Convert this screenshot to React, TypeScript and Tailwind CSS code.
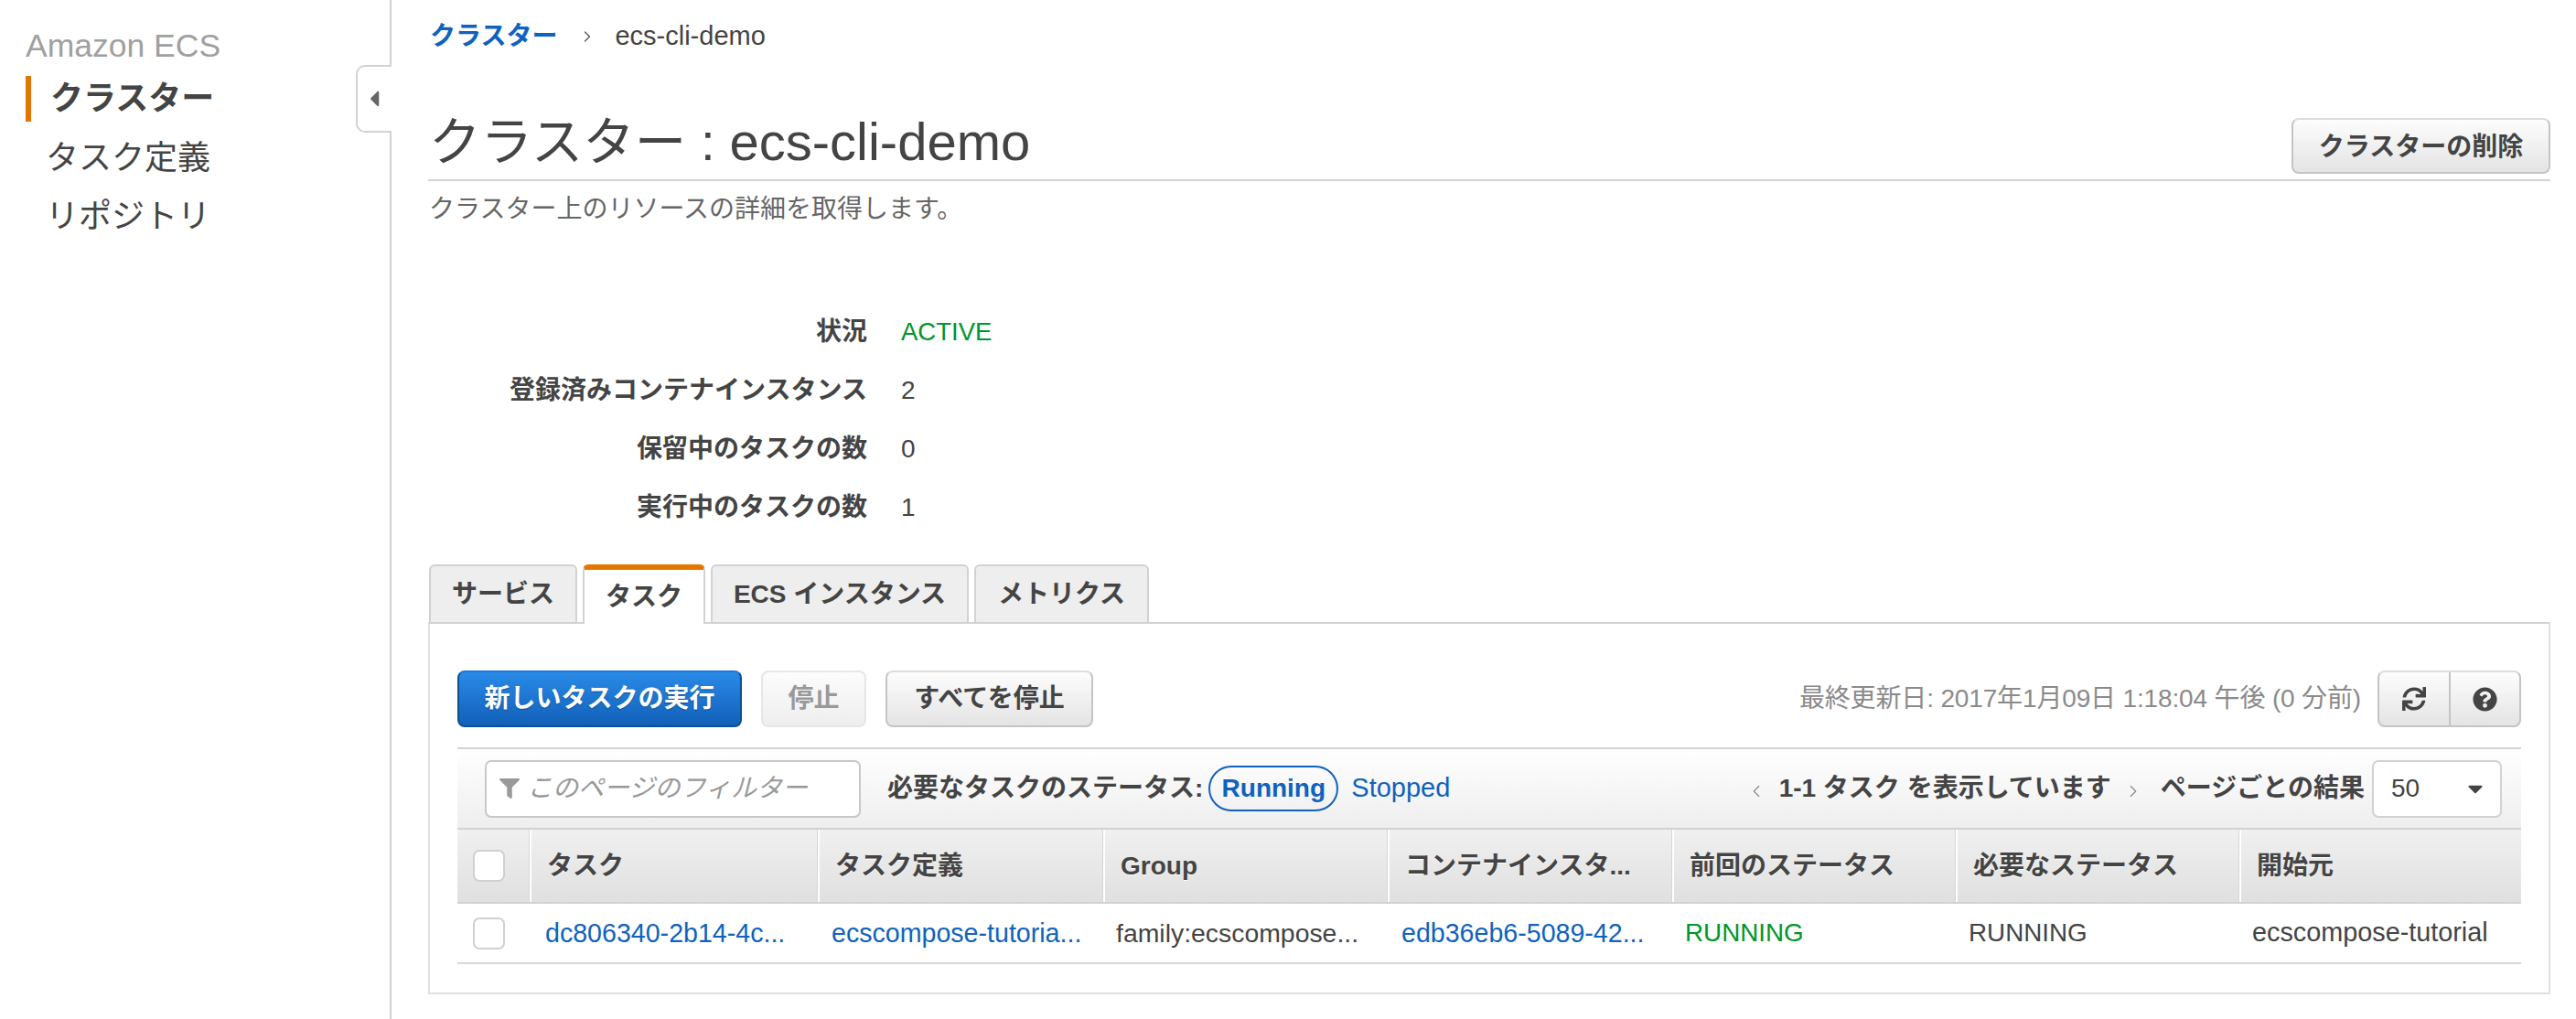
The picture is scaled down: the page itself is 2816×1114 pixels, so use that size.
import { FaCaretDown, FaCaretLeft, FaFilter, FaQuestionCircle, FaSync } from 'react-icons/fa'
import { ChevronLeft, ChevronRight } from 'lucide-react'

const detailRows = [
  { label: '状況', value: 'ACTIVE', green: true },
  { label: '登録済みコンテナインスタンス', value: '2' },
  { label: '保留中のタスクの数', value: '0' },
  { label: '実行中のタスクの数', value: '1' },
]

const columns = ['タスク', 'タスク定義', 'Group', 'コンテナインスタ...', '前回のステータス', '必要なステータス', '開始元']

const gridCols = 'grid grid-cols-[79px_315px_312px_311px_311px_310px_310px_308px]'

function Checkbox() {
  return <div className="h-[35px] w-[35px] rounded-[7px] border-2 border-[#d0d0d0] bg-white" />
}

export default function App() {
  return (
    <div className="flex min-h-[1114px] overflow-hidden bg-white text-[28px] text-[#444] [font-family:'Liberation_Sans','Noto_Sans_CJK_JP',sans-serif]">
      {/* sidebar */}
      <aside className="relative w-[428px] shrink-0 border-r-2 border-[#d2d2d2] pt-[30px]">
        <div className="pl-[28px] text-[35.5px] leading-[40px] text-[#a0a0a0]">Amazon ECS</div>
        <div className="mt-[13px] ml-[28px] flex h-[50px] items-center border-l-[6px] border-[#e47600] pl-[21px] text-[36px] font-bold">
          クラスター
        </div>
        <div className="mt-[15px] flex h-[50px] items-center pl-[50px] text-[36px]">タスク定義</div>
        <div className="mt-[14px] flex h-[50px] items-center pl-[50px] text-[36px]">リポジトリ</div>
        <div className="absolute top-[71px] right-[-2px] flex h-[74px] w-[39px] items-center rounded-l-[10px] border-2 border-r-0 border-[#d2d2d2] bg-white pl-[10px]">
          <FaCaretLeft className="h-[28px] w-[16px] text-[#666]" />
        </div>
      </aside>

      {/* main */}
      <main className="min-w-0 flex-1 pr-[28px] pl-[40px]">
        <div className="flex h-[80px] items-center pl-[2px]">
          <a className="font-bold text-[#0f62bd]">クラスター</a>
          <ChevronRight className="mr-[20px] ml-[23px] h-[22px] w-[20px] text-[#555]" strokeWidth={1.5} />
          <span className="text-[29px]">ecs-cli-demo</span>
        </div>

        <div className="flex h-[118px] items-end justify-between border-b-2 border-[#d2d2d2]">
          <h1 className="mb-[9px] pl-[1px] text-[56.5px] leading-[62px] font-normal">
            クラスター : <span className="text-[58px]">ecs-cli-demo</span>
          </h1>
          <button className="mb-[6px] flex h-[61px] w-[283px] items-center justify-center rounded-[8px] border-2 border-[#c4c4c4] border-t-[#dcdcdc] bg-linear-to-b from-[#fdfdfd] to-[#e4e4e4] pt-[2px] font-bold">
            クラスターの削除
          </button>
        </div>

        <div className="flex h-[60px] items-center pt-[2px] pl-[1px] text-[#666]">クラスター上のリソースの詳細を取得します。</div>

        <dl className="mt-[72px]">
          {detailRows.map(row => (
            <div key={row.label} className="flex h-[64px] items-center pt-[2px]">
              <dt className="w-[480px] text-right font-bold">{row.label}</dt>
              <dd className={row.green ? 'ml-[37px] text-[27.5px] text-[#00962a]' : 'ml-[37px]'}>{row.value}</dd>
            </div>
          ))}
        </dl>

        {/* tabs */}
        <div className="relative z-10 mt-[31px] flex h-[65px] gap-[6px] pl-[1px]">
          <div className="flex w-[162px] items-center justify-center rounded-t-[6px] border-2 border-[#d2d2d2] bg-[#eeeeee] font-bold">サービス</div>
          <div className="flex w-[134px] items-center justify-center rounded-t-[6px] border-x-2 border-t-[6px] border-[#d2d2d2] border-t-[#e47600] bg-white font-bold">タスク</div>
          <div className="flex w-[282px] items-center justify-center rounded-t-[6px] border-2 border-[#d2d2d2] bg-[#eeeeee] font-bold">ECS インスタンス</div>
          <div className="flex w-[191px] items-center justify-center rounded-t-[6px] border-2 border-[#d2d2d2] bg-[#eeeeee] font-bold">メトリクス</div>
        </div>

        {/* panel */}
        <section className="-mt-[2px] border-2 border-[#e0e0e0] border-t-[#d2d2d2] px-[30px] pt-[51px] pb-[31px]">
          <div className="flex h-[62px] items-center">
            <button className="flex h-[62px] w-[311px] items-center justify-center rounded-[8px] border-2 border-[#0b4f94] border-t-[#1a78d8] bg-linear-to-b from-[#2a8ae8] to-[#1160b8] font-bold text-white [text-shadow:0_1px_1px_#0b4f94]">
              新しいタスクの実行
            </button>
            <button className="ml-[21px] flex h-[62px] w-[115px] items-center justify-center rounded-[8px] border-2 border-[#e6e6e6] bg-linear-to-b from-[#fcfcfc] to-[#eeeeee] font-bold text-[#999]">
              停止
            </button>
            <button className="ml-[21px] flex h-[62px] w-[227px] items-center justify-center rounded-[8px] border-2 border-[#c4c4c4] border-t-[#dcdcdc] bg-linear-to-b from-[#fdfdfd] to-[#e4e4e4] font-bold">
              すべてを停止
            </button>
            <span className="mr-[18px] ml-auto tracking-[-0.15px] text-[#8a8a8a]">最終更新日: 2017年1月09日 1:18:04 午後 (0 分前)</span>
            <div className="flex h-[62px] w-[157px] rounded-[8px] border-2 border-[#c4c4c4] border-t-[#dcdcdc] bg-linear-to-b from-[#fdfdfd] to-[#e4e4e4]">
              <div className="flex flex-1 items-center justify-center border-r-2 border-[#c4c4c4]">
                <FaSync className="h-[26px] w-[26px] text-[#444]" />
              </div>
              <div className="flex flex-1 items-center justify-center">
                <FaQuestionCircle className="h-[27px] w-[27px] text-[#444]" />
              </div>
            </div>
          </div>

          {/* filter bar */}
          <div className="mt-[22px] flex h-[88px] items-center border-t-2 border-[#d2d2d2] bg-linear-to-b from-white to-[#eeeeee] pr-[21px] pl-[30px]">
            <div className="flex h-[63px] w-[411px] items-center rounded-[7px] border-2 border-[#c8c8c8] bg-white pl-[14px] text-[#999] italic">
              <FaFilter className="mr-[8px] h-[22px] w-[22px] text-[#999]" />
              このページのフィルター
            </div>
            <span className="ml-[29px] font-bold">必要なタスクのステータス:</span>
            <span className="ml-[6px] flex h-[50px] w-[142px] items-center justify-center rounded-full border-2 border-[#0f62bd] font-bold text-[#0f62bd]">Running</span>
            <span className="ml-[14px] text-[29px] text-[#0f62bd]">Stopped</span>
            <ChevronLeft className="mt-[5px] ml-auto h-[24px] w-[22px] text-[#888]" strokeWidth={1.25} />
            <span className="ml-[14px] font-bold">1-1 タスク を表示しています</span>
            <ChevronRight className="mt-[5px] ml-[13px] h-[24px] w-[22px] text-[#888]" strokeWidth={1.25} />
            <span className="ml-[19px] font-bold">ページごとの結果</span>
            <div className="ml-[8px] flex h-[63px] w-[142px] items-center justify-between rounded-[7px] border-2 border-[#d2d2d2] bg-white pr-[16px] pl-[19px]">
              <span>50</span>
              <FaCaretDown className="h-[26px] w-[22px] text-[#444]" />
            </div>
          </div>

          {/* table */}
          <div className={`${gridCols} h-[83px] border-y-2 border-[#d2d2d2] bg-linear-to-b from-[#f0f0f0] to-[#e0e0e0] font-bold [text-shadow:0_1px_0_#fff]`}>
            <div className="flex items-center pl-[17px]">
              <Checkbox />
            </div>
            {columns.map(col => (
              <div key={col} className="flex items-center truncate border-l-2 border-white pl-[17px] shadow-[-1px_0_0_#d6d6d6]">
                {col}
              </div>
            ))}
          </div>
          <div className={`${gridCols} h-[66px] border-b-2 border-[#d8d8d8]`}>
            <div className="flex items-center pl-[17px]">
              <Checkbox />
            </div>
            <div className="flex items-center pl-[17px] text-[28.6px] text-[#0f62bd]">dc806340-2b14-4c...</div>
            <div className="flex items-center pl-[15px] text-[28.6px] text-[#0f62bd]">ecscompose-tutoria...</div>
            <div className="flex items-center pl-[14px] text-[28.4px]">family:ecscompose...</div>
            <div className="flex items-center pl-[15px] text-[28.6px] text-[#0f62bd]">edb36eb6-5089-42...</div>
            <div className="flex items-center pl-[14px] text-[27.8px] text-[#00962a]">RUNNING</div>
            <div className="flex items-center pl-[14px] text-[27.8px]">RUNNING</div>
            <div className="flex items-center pl-[14px] text-[28.8px]">ecscompose-tutorial</div>
          </div>
        </section>
      </main>
    </div>
  )
}
